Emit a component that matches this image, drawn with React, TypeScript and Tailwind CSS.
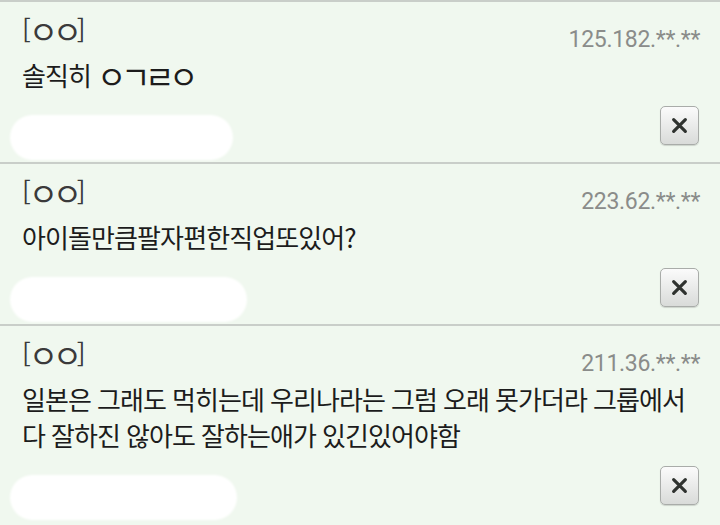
import React from 'react';

type Comment = {
  ip: string;
  text: React.ReactNode;
  blobWidth: number;
};

const Jamo = ({ chars, shift }: { chars: string; shift: string }) => (
  <>
    {chars.split('').map((ch, i) => (
      <span key={i} className={`inline-block w-[24px] text-center text-[32px] leading-[10px] tracking-normal ${shift}`}>
        {ch}
      </span>
    ))}
  </>
);

const comments: Comment[] = [
  {
    ip: '125.182.**.**',
    text: (
      <>
        솔직히 <Jamo chars="ㅇㄱㄹㅇ" shift="align-[-3px]" />
      </>
    ),
    blobWidth: 223,
  },
  { ip: '223.62.**.**', text: '아이돌만큼팔자편한직업또있어?', blobWidth: 237 },
  {
    ip: '211.36.**.**',
    text: '일본은 그래도 먹히는데 우리나라는 그럼 오래 못가더라 그룹에서 다 잘하진 않아도 잘하는애가 있긴있어야함',
    blobWidth: 227,
  },
];

const CloseButton = () => (
  <button className="w-[39px] h-[39px] shrink-0 rounded-[5px] border border-[#a9aca9] bg-gradient-to-b from-[#fbfbfb] to-[#d9dbd9] shadow-[0_1px_1px_rgba(0,0,0,0.15)] flex items-center justify-center">
    <svg width="17" height="17" viewBox="0 0 16 16">
      <path d="M2.5 2.5 L13.5 13.5 M13.5 2.5 L2.5 13.5" stroke="#2f322f" strokeWidth="3" strokeLinecap="round" />
    </svg>
  </button>
);

const CommentRow = ({ c }: { c: Comment }) => (
  <div className="border-t-2 border-[#c9cec9] pl-[22px] pr-[20px] pt-[8px] pb-[2px]">
    <div className="flex justify-between items-start">
      <span className="text-[26px] leading-[34px] text-[#3a3a3a]">
        [<span className="ml-[-2px]"><Jamo chars="ㅇㅇ" shift="align-[-6px]" /></span>]
      </span>
      <span className="mt-[18px] text-[23px] leading-[24px] tracking-[-0.3px] text-[#8a8c8a] font-['Roboto',sans-serif]">
        {c.ip}
      </span>
    </div>
    <p className="mt-[5px] text-[26px] leading-[36px] tracking-[-0.9px] [word-spacing:1px] text-[#1c1c1c]">{c.text}</p>
    <div className="flex justify-between items-start mt-[13px]">
      <div
        className="ml-[-12px] mt-[9px] h-[45px] rounded-[24px] bg-white blur-[1px]"
        style={{ width: c.blobWidth }}
      />
      <div className="mr-px">
        <CloseButton />
      </div>
    </div>
  </div>
);

export default function App() {
  return (
    <div className="w-[720px] h-[525px] overflow-hidden bg-[#f0f8ef] font-['Noto_Sans_CJK_KR','Noto_Sans',sans-serif]">
      {comments.map((c) => (
        <CommentRow key={c.ip} c={c} />
      ))}
    </div>
  );
}
